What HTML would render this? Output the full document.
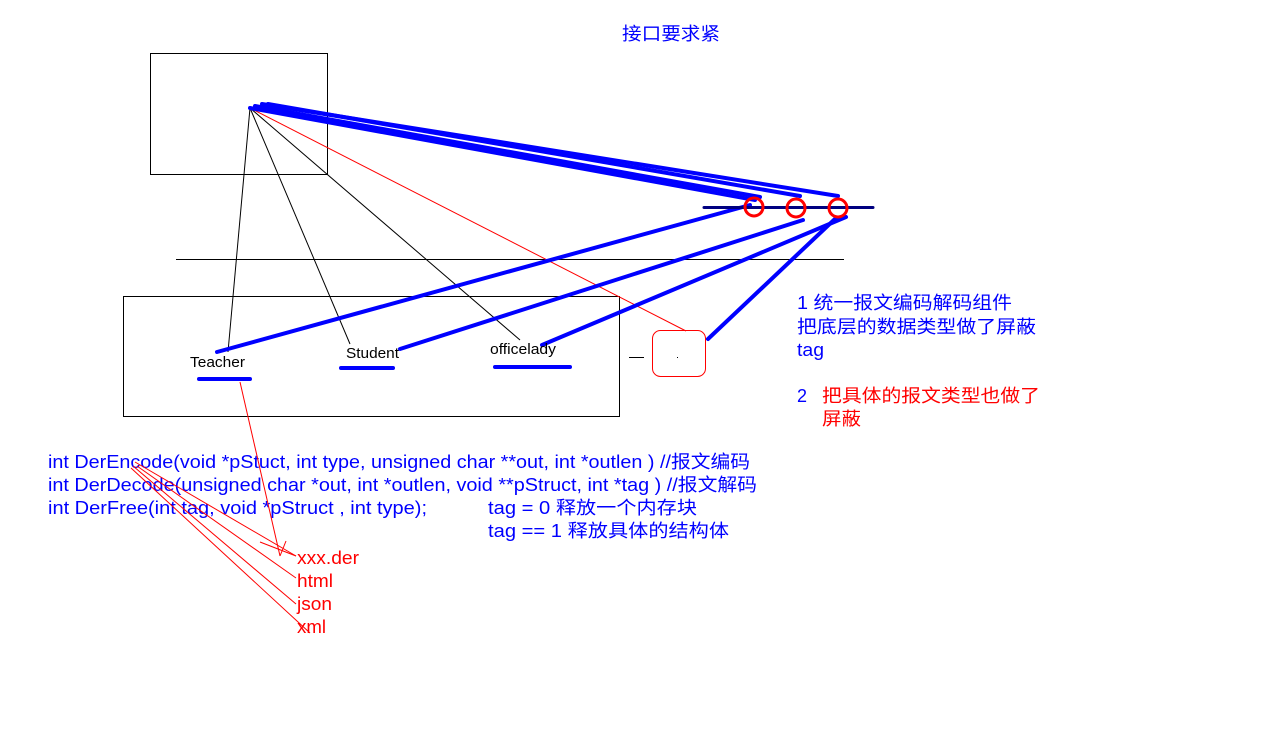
<!DOCTYPE html>
<html><head><meta charset="utf-8"><style>
html,body{margin:0;padding:0;background:#fff;}
svg{display:block}
text{font-family:"Liberation Sans","Noto Sans CJK SC",sans-serif;}
</style></head><body>
<svg width="1268" height="729" viewBox="0 0 1268 729" xmlns="http://www.w3.org/2000/svg">
<text x="622" y="40" font-size="18" fill="#0000ff" textLength="98" lengthAdjust="spacingAndGlyphs">接口要求紧</text>
<rect x="150.5" y="53.5" width="177" height="121" fill="none" stroke="#000" stroke-width="1"/>
<line x1="176" y1="259.5" x2="844" y2="259.5" stroke="#000"/>
<rect x="123.5" y="296.5" width="496" height="120" fill="none" stroke="#000"/>
<g stroke="#000" stroke-width="1">
<line x1="250" y1="108" x2="228" y2="352"/>
<line x1="250" y1="108" x2="350" y2="344"/>
<line x1="250" y1="108" x2="520" y2="340"/>
<line x1="629" y1="357.5" x2="644" y2="357.5"/>
</g>
<line x1="250" y1="108" x2="686" y2="331" stroke="#f00" stroke-width="1"/>
<rect x="652.5" y="330.5" width="53" height="46" rx="8" fill="none" stroke="#f00"/>
<rect x="677" y="357" width="1" height="1" fill="#000"/>
<g stroke="#0000ff" stroke-width="4" stroke-linecap="round" fill="none">
<line x1="250" y1="108" x2="755" y2="200"/>
<line x1="255" y1="106" x2="760" y2="197"/>
<line x1="262" y1="104" x2="838" y2="196"/>
<line x1="268" y1="104" x2="800" y2="196"/>
<line x1="217" y1="352" x2="750" y2="205"/>
<line x1="400" y1="349" x2="803" y2="220"/>
<line x1="542" y1="345" x2="846" y2="217"/>
<line x1="708" y1="339" x2="836" y2="218"/>
<line x1="199" y1="379" x2="250" y2="379"/>
<line x1="341" y1="368" x2="393" y2="368"/>
<line x1="495" y1="367" x2="570" y2="367"/>
</g>
<line x1="704" y1="207.5" x2="873" y2="207.5" stroke="#000080" stroke-width="3" stroke-linecap="round"/>
<g stroke="#f00" stroke-width="3" fill="none">
<circle cx="754" cy="207" r="9"/>
<circle cx="796" cy="208" r="9"/>
<circle cx="838" cy="208" r="9"/>
</g>
<g font-size="15" fill="#000" lengthAdjust="spacingAndGlyphs">
<text x="190" y="367" textLength="55" lengthAdjust="spacingAndGlyphs">Teacher</text>
<text x="346" y="358" textLength="53" lengthAdjust="spacingAndGlyphs">Student</text>
<text x="490" y="354" textLength="66" lengthAdjust="spacingAndGlyphs">officelady</text>
</g>
<g font-size="18" fill="#0000ff">
<text x="797" y="309" textLength="215" lengthAdjust="spacingAndGlyphs">1 统一报文编码解码组件</text>
<text x="797" y="333" textLength="239" lengthAdjust="spacingAndGlyphs">把底层的数据类型做了屏蔽</text>
<text x="797" y="356" textLength="27" lengthAdjust="spacingAndGlyphs">tag</text>
<text x="797" y="402">2</text>
</g>
<g font-size="18" fill="#ff0000">
<text x="822" y="402" textLength="218" lengthAdjust="spacingAndGlyphs">把具体的报文类型也做了</text>
<text x="822" y="425" textLength="39" lengthAdjust="spacingAndGlyphs">屏蔽</text>
</g>
<g font-size="18" fill="#0000ff">
<text x="48" y="468" textLength="702" lengthAdjust="spacingAndGlyphs">int DerEncode(void *pStuct, int type, unsigned char **out, int *outlen ) //报文编码</text>
<text x="48" y="491" textLength="709" lengthAdjust="spacingAndGlyphs">int DerDecode(unsigned char *out, int *outlen, void **pStruct, int *tag ) //报文解码</text>
<text x="48" y="514" textLength="379" lengthAdjust="spacingAndGlyphs">int DerFree(int tag, void *pStruct , int type);</text>
<text x="488" y="514" textLength="209" lengthAdjust="spacingAndGlyphs">tag = 0 释放一个内存块</text>
<text x="488" y="537" textLength="241" lengthAdjust="spacingAndGlyphs">tag == 1 释放具体的结构体</text>
</g>
<g font-size="18" fill="#ff0000">
<text x="297" y="564" textLength="62" lengthAdjust="spacingAndGlyphs">xxx.der</text>
<text x="297" y="587" textLength="36" lengthAdjust="spacingAndGlyphs">html</text>
<text x="297" y="610" textLength="35" lengthAdjust="spacingAndGlyphs">json</text>
<text x="297" y="633" textLength="29" lengthAdjust="spacingAndGlyphs">xml</text>
</g>
<g stroke="#f00" stroke-width="1" fill="none">
<line x1="240" y1="382" x2="280" y2="556"/>
<line x1="280" y1="556" x2="286" y2="541"/>
<line x1="260" y1="542" x2="296" y2="556"/>
<line x1="135" y1="462" x2="296" y2="556"/>
<line x1="137" y1="466" x2="296" y2="578"/>
<line x1="133" y1="466" x2="296" y2="604"/>
<line x1="131" y1="468" x2="310" y2="633"/>
</g>
</svg>
</body></html>
